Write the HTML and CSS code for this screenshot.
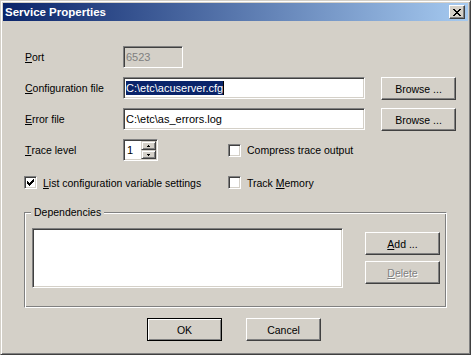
FILE: index.html
```html
<!DOCTYPE html>
<html>
<head>
<meta charset="utf-8">
<link rel="stylesheet" href="styles.css">
</head>
<body>
<div class="window">
  <div class="titlebar">
    <span class="title">Service Properties</span>
    <button class="close" type="button" aria-label="Close">
      <svg width="8" height="7" viewBox="0 0 8 7" shape-rendering="crispEdges">
        <path d="M0 0h2v1h-2z M6 0h2v1h-2z M1 1h2v1h-2z M5 1h2v1h-2z M2 2h4v1h-4z M3 3h2v1h-2z M2 4h4v1h-4z M1 5h2v1h-2z M5 5h2v1h-2z M0 6h2v1h-2z M6 6h2v1h-2z" fill="#000"/>
      </svg>
    </button>
  </div>
  <div class="client">
    <div class="form">
      <label class="lbl"><u>P</u>ort</label>
      <div class="edit disabled port">6523</div>

      <label class="lbl"><u>C</u>onfiguration file</label>
      <div class="edit wide"><span class="sel">C:\etc\acuserver.cfg</span><span class="caret"></span></div>
      <button class="btn browse" type="button">Browse ...</button>

      <label class="lbl"><u>E</u>rror file</label>
      <div class="edit wide">C:\etc\as_errors.log</div>
      <button class="btn browse" type="button">Browse ...</button>

      <label class="lbl"><u>T</u>race level</label>
      <div class="spin">
        <span class="spin-val">1</span>
        <span class="spin-btns">
          <span class="spin-btn"><svg width="3" height="2" viewBox="0 0 3 2" shape-rendering="crispEdges"><path d="M1 0h1v1h-1z M0 1h3v1h-3z" fill="#000"/></svg></span>
          <span class="spin-btn"><svg width="3" height="2" viewBox="0 0 3 2" shape-rendering="crispEdges"><path d="M0 0h3v1h-3z M1 1h1v1h-1z" fill="#000"/></svg></span>
        </span>
      </div>
      <div class="check col3"><span class="box"></span><span>Compress trace output</span></div>

      <div class="check row5 span12"><span class="box">
        <svg width="7" height="7" viewBox="0 0 7 7" shape-rendering="crispEdges"><path d="M6 0h1v1h-1z M5 1h2v1h-2z M0 2h1v1h-1z M4 2h3v1h-3z M0 3h2v1h-2z M3 3h3v1h-3z M0 4h5v1h-5z M1 5h3v1h-3z M2 6h1v1h-1z" fill="#000"/></svg>
      </span><span><u>L</u>ist configuration variable settings</span></div>
      <div class="check row5 col3"><span class="box"></span><span>Track <u>M</u>emory</span></div>
    </div>

    <div class="group">
      <span class="group-title">Dependencies</span>
      <div class="listbox"></div>
      <div class="group-btns">
        <button class="btn" type="button"><span><u>A</u>dd ...</span></button>
        <button class="btn disabled" type="button"><span><u>D</u>elete</span></button>
      </div>
    </div>

    <div class="actions">
      <button class="btn default" type="button">OK</button>
      <button class="btn" type="button">Cancel</button>
    </div>
  </div>
</div>
</body>
</html>
```
FILE: styles.css
```css
html, body {
  margin: 0;
  padding: 0;
}
body {
  background: #d4d0c8;
  font-family: "Liberation Sans", Arial, sans-serif;
  font-size: 10.5px;
  color: #000;
}
u {
  text-decoration: underline;
  text-underline-offset: 1px;
}
.window {
  width: 471px;
  height: 355px;
  box-sizing: border-box;
  border: 1px solid;
  border-color: #d4d0c8 #404040 #404040 #d4d0c8;
  box-shadow: inset 1px 1px #fff, inset -1px -1px #808080;
  padding: 2px;
  display: flex;
  flex-direction: column;
}
.titlebar {
  height: 18px;
  flex: none;
  display: flex;
  align-items: center;
  justify-content: space-between;
  background: linear-gradient(to right, #0a246a, #a6caf0);
  padding-left: 2px;
}
.title {
  color: #fff;
  font-weight: bold;
  font-size: 11.5px;
  line-height: 18px;
}
.close {
  appearance: none;
  box-sizing: border-box;
  width: 16px;
  height: 14px;
  margin: 0 3px 0 0;
  padding: 0;
  background: #d4d0c8;
  border: 1px solid;
  border-color: #fff #404040 #404040 #fff;
  box-shadow: inset -1px -1px #808080;
  display: flex;
  align-items: center;
  justify-content: center;
}
.close svg {
  display: block;
  margin-left: -1px;
}
.client {
  padding: 25px 0 0 21px;
}
.form {
  display: grid;
  grid-template-columns: 99px 105px 137px 16px 75px;
  grid-template-rows: 22px 22px 22px 22px 19px;
  row-gap: 9px;
}
.lbl {
  display: flex;
  align-items: center;
  padding-left: 1px;
  grid-column: 1;
}
.edit {
  box-sizing: border-box;
  height: 22px;
  border: 1px solid;
  border-color: #808080 #fff #fff #808080;
  box-shadow: inset 1px 1px #404040, inset -1px -1px #d4d0c8;
  background: #fff;
  padding: 0 2px;
  display: flex;
  align-items: center;
  font-size: 11px;
  white-space: nowrap;
}
.edit.disabled {
  background: #d4d0c8;
  color: #808080;
}
.port {
  width: 60px;
  grid-column: 2;
}
.wide {
  grid-column: 2 / 4;
}
.sel {
  background: #0a246a;
  color: #fff;
  line-height: 14px;
}
.caret {
  width: 1px;
  height: 14px;
  background: #000;
}
.btn {
  appearance: none;
  box-sizing: border-box;
  width: 75px;
  height: 23px;
  margin: 0;
  padding: 0;
  border: 1px solid;
  border-color: #fff #404040 #404040 #fff;
  box-shadow: inset -1px -1px #808080;
  background: #d4d0c8;
  font: inherit;
  color: #000;
  display: flex;
  align-items: center;
  justify-content: center;
}
.browse {
  grid-column: 5;
}
.btn.disabled {
  color: #808080;
  text-shadow: 1px 1px #fff;
}
.btn.default {
  border-color: #000;
  box-shadow: inset 1px 1px #fff, inset -1px -1px #808080;
}
.spin {
  grid-column: 2;
  box-sizing: border-box;
  width: 35px;
  height: 22px;
  border: 1px solid;
  border-color: #808080 #fff #fff #808080;
  box-shadow: inset 1px 1px #404040, inset -1px -1px #d4d0c8;
  background: #fff;
  padding: 1px;
  display: flex;
  font-size: 11px;
}
.spin-val {
  flex: 1;
  padding-left: 2px;
  display: flex;
  align-items: center;
}
.spin-btns {
  width: 15px;
  display: flex;
  flex-direction: column;
}
.spin-btn {
  box-sizing: border-box;
  height: 9px;
  border: 1px solid;
  border-color: #d4d0c8 #404040 #404040 #d4d0c8;
  box-shadow: inset 1px 1px #fff, inset -1px -1px #808080;
  background: #d4d0c8;
  display: flex;
  align-items: center;
  justify-content: center;
}
.spin-btn svg {
  display: block;
}
.check {
  display: flex;
  align-items: center;
  gap: 6px;
  white-space: nowrap;
}
.col3 {
  grid-column: 3;
}
.span12 {
  grid-column: 1 / 3;
}
.row5 {
  grid-row: 5;
  align-self: end;
  height: 13px;
}
.box {
  box-sizing: border-box;
  width: 13px;
  height: 13px;
  flex: none;
  border: 1px solid;
  border-color: #808080 #fff #fff #808080;
  box-shadow: inset 1px 1px #404040, inset -1px -1px #d4d0c8;
  background: #fff;
  padding: 2px;
}
.box svg {
  display: block;
}
.group {
  position: relative;
  box-sizing: border-box;
  width: 423px;
  height: 96px;
  margin-top: 23px;
  border: 1px solid;
  border-color: #808080 #fff #fff #808080;
  box-shadow: inset 1px 1px #fff, inset -1px -1px #808080;
  padding: 15px 6px 0 7px;
  display: flex;
  align-items: flex-start;
}
.group-title {
  position: absolute;
  top: -7px;
  left: 6px;
  padding: 0 3px;
  line-height: 13px;
  background: #d4d0c8;
}
.listbox {
  box-sizing: border-box;
  width: 311px;
  height: 60px;
  border: 1px solid;
  border-color: #808080 #fff #fff #808080;
  box-shadow: inset 1px 1px #404040, inset -1px -1px #d4d0c8;
  background: #fff;
}
.group-btns {
  margin: 4px 0 0 22px;
  display: flex;
  flex-direction: column;
  gap: 6px;
}
.actions {
  margin-top: 10px;
  padding-left: 123px;
  display: flex;
  gap: 24px;
}
```
